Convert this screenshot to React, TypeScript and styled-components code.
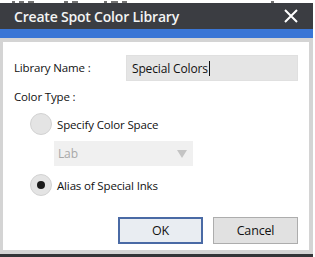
import React, { useState } from 'react';
import styled, { createGlobalStyle } from 'styled-components';

const GlobalStyle = createGlobalStyle`
  html, body {
    margin: 0;
    padding: 0;
    background: #ffffff;
  }
  body {
    font-family: "Open Sans", "Noto Sans", "Liberation Sans", sans-serif;
  }
`;

const Screen = styled.div`
  width: 315px;
  height: 257px;
  overflow: hidden;
  display: flex;
  flex-direction: column;
  background: #ffffff;
`;

// bits of the window behind the dialog
const BehindStrip = styled.div`
  height: 3px;
  overflow: hidden;
  display: flex;
  align-items: flex-end;
  padding-left: 12px;
  gap: 4px;
`;

const BehindMark = styled.div<{ w: number; gap?: number }>`
  width: ${p => p.w}px;
  height: 2px;
  margin-left: ${p => p.gap || 0}px;
  background: #3a3a3a;
  opacity: 0.7;
`;

const Dialog = styled.div`
  width: 313px;
  flex: 1;
  display: flex;
  flex-direction: column;
  border-bottom: 3px solid #333538;
`;

const TitleBar = styled.div`
  height: 26px;
  background: #3b3d42;
  display: flex;
  align-items: center;
  justify-content: space-between;
  padding: 0 14px 0 14px;
`;

const Title = styled.div`
  color: #f4f4f4;
  font-weight: 600;
  font-size: 14px;
  letter-spacing: -0.2px;
`;

const CloseButton = styled.div`
  width: 14px;
  height: 14px;
  display: flex;
  margin-right: 1px;
`;

const AccentBar = styled.div`
  height: 9px;
  background: #3a76d6;
`;

const Frame = styled.div`
  flex: 1;
  display: flex;
  flex-direction: column;
  background: #d4d4d4;
  padding: 4px 4px 4px 3px;
`;

const Body = styled.div`
  flex: 1;
  background: #ffffff;
  display: flex;
  flex-direction: column;
  padding: 13px 11px 0 11px;
  font-size: 11.5px;
  letter-spacing: -0.15px;
  color: #111;
`;

const Row = styled.div`
  display: flex;
  align-items: center;
`;

const Label = styled.div<{ width?: number }>`
  width: ${p => (p.width ? `${p.width}px` : 'auto')};
  margin-top: -2px;
`;

const TextBox = styled.div`
  flex: 1;
  height: 24px;
  background: #e5e5e5;
  border: 1px solid #e0e0e0;
  display: flex;
  align-items: center;
  padding-left: 5px;
  font-size: 12px;
`;

const Caret = styled.span`
  display: inline-block;
  width: 1px;
  height: 15px;
  background: #111;
  margin-left: 1px;
`;

const SectionLabel = styled.div`
  margin-top: 6px;
  height: 18px;
  display: flex;
  align-items: center;
`;

const Options = styled.div`
  display: flex;
  flex-direction: column;
  padding-left: 16px;
  margin-top: 7px;
`;

const RadioRow = styled.div`
  display: flex;
  align-items: center;
  gap: 5px;
  height: 24px;
`;

const RadioCircle = styled.div<{ checked?: boolean }>`
  width: 22px;
  height: 22px;
  border-radius: 50%;
  background: #e4e4e4;
  border: 1px solid #d2d2d2;
  box-sizing: border-box;
  display: flex;
  align-items: center;
  justify-content: center;
  &::after {
    content: '';
    width: 8px;
    height: 8px;
    border-radius: 50%;
    background: ${p => (p.checked ? '#1b1b1b' : 'transparent')};
  }
`;

const SelectBox = styled.div`
  margin: 5px 0 7px 24px;
  width: 139px;
  height: 25px;
  background: #f0f0f0;
  display: flex;
  align-items: center;
  justify-content: space-between;
  padding: 0 6px 0 4px;
  box-sizing: border-box;
  color: #a8a8a8;
  font-size: 12px;
`;

const Arrow = styled.div`
  width: 0;
  height: 0;
  border-left: 5px solid transparent;
  border-right: 5px solid transparent;
  border-top: 8px solid #c4c4c4;
`;

const Footer = styled.div`
  margin-top: auto;
  display: flex;
  justify-content: flex-end;
  gap: 10px;
  padding: 0 0 6px 0;
`;

const Button = styled.div<{ primary?: boolean }>`
  width: 85px;
  height: 27px;
  box-sizing: border-box;
  display: flex;
  align-items: center;
  justify-content: center;
  font-size: 12.5px;
  background: ${p => (p.primary ? '#e9edf2' : '#e1e1e1')};
  border: ${p => (p.primary ? '2px solid #4a6aa5' : '1px solid #adadad')};
`;

const App: React.FC = () => {
  const [name] = useState<string>('Special Colors');

  return (
    <Screen>
      <GlobalStyle />
      <BehindStrip>
        <BehindMark w={3} />
        <BehindMark w={5} />
        <BehindMark w={6} />
        <BehindMark w={4} gap={26} />
        <BehindMark w={6} />
        <BehindMark w={3} gap={22} />
        <BehindMark w={7} />
        <BehindMark w={5} />
        <BehindMark w={3} gap={140} />
      </BehindStrip>
      <Dialog>
        <TitleBar>
          <Title>Create Spot Color Library</Title>
          <CloseButton>
            <svg width="14" height="14" viewBox="0 0 14 14">
              <path d="M1 1 L13 13 M13 1 L1 13" stroke="#ffffff" strokeWidth="2" />
            </svg>
          </CloseButton>
        </TitleBar>
        <AccentBar />
        <Frame>
          <Body>
            <Row>
              <Label width={112}>Library Name :</Label>
              <TextBox>
                {name}
                <Caret />
              </TextBox>
            </Row>
            <SectionLabel>Color Type :</SectionLabel>
            <Options>
              <RadioRow>
                <RadioCircle />
                <span>Specify Color Space</span>
              </RadioRow>
              <SelectBox>
                <span>Lab</span>
                <Arrow />
              </SelectBox>
              <RadioRow>
                <RadioCircle checked />
                <span>Alias of Special Inks</span>
              </RadioRow>
            </Options>
            <Footer>
              <Button primary>OK</Button>
              <Button>Cancel</Button>
            </Footer>
          </Body>
        </Frame>
      </Dialog>
    </Screen>
  );
};

export default App;
